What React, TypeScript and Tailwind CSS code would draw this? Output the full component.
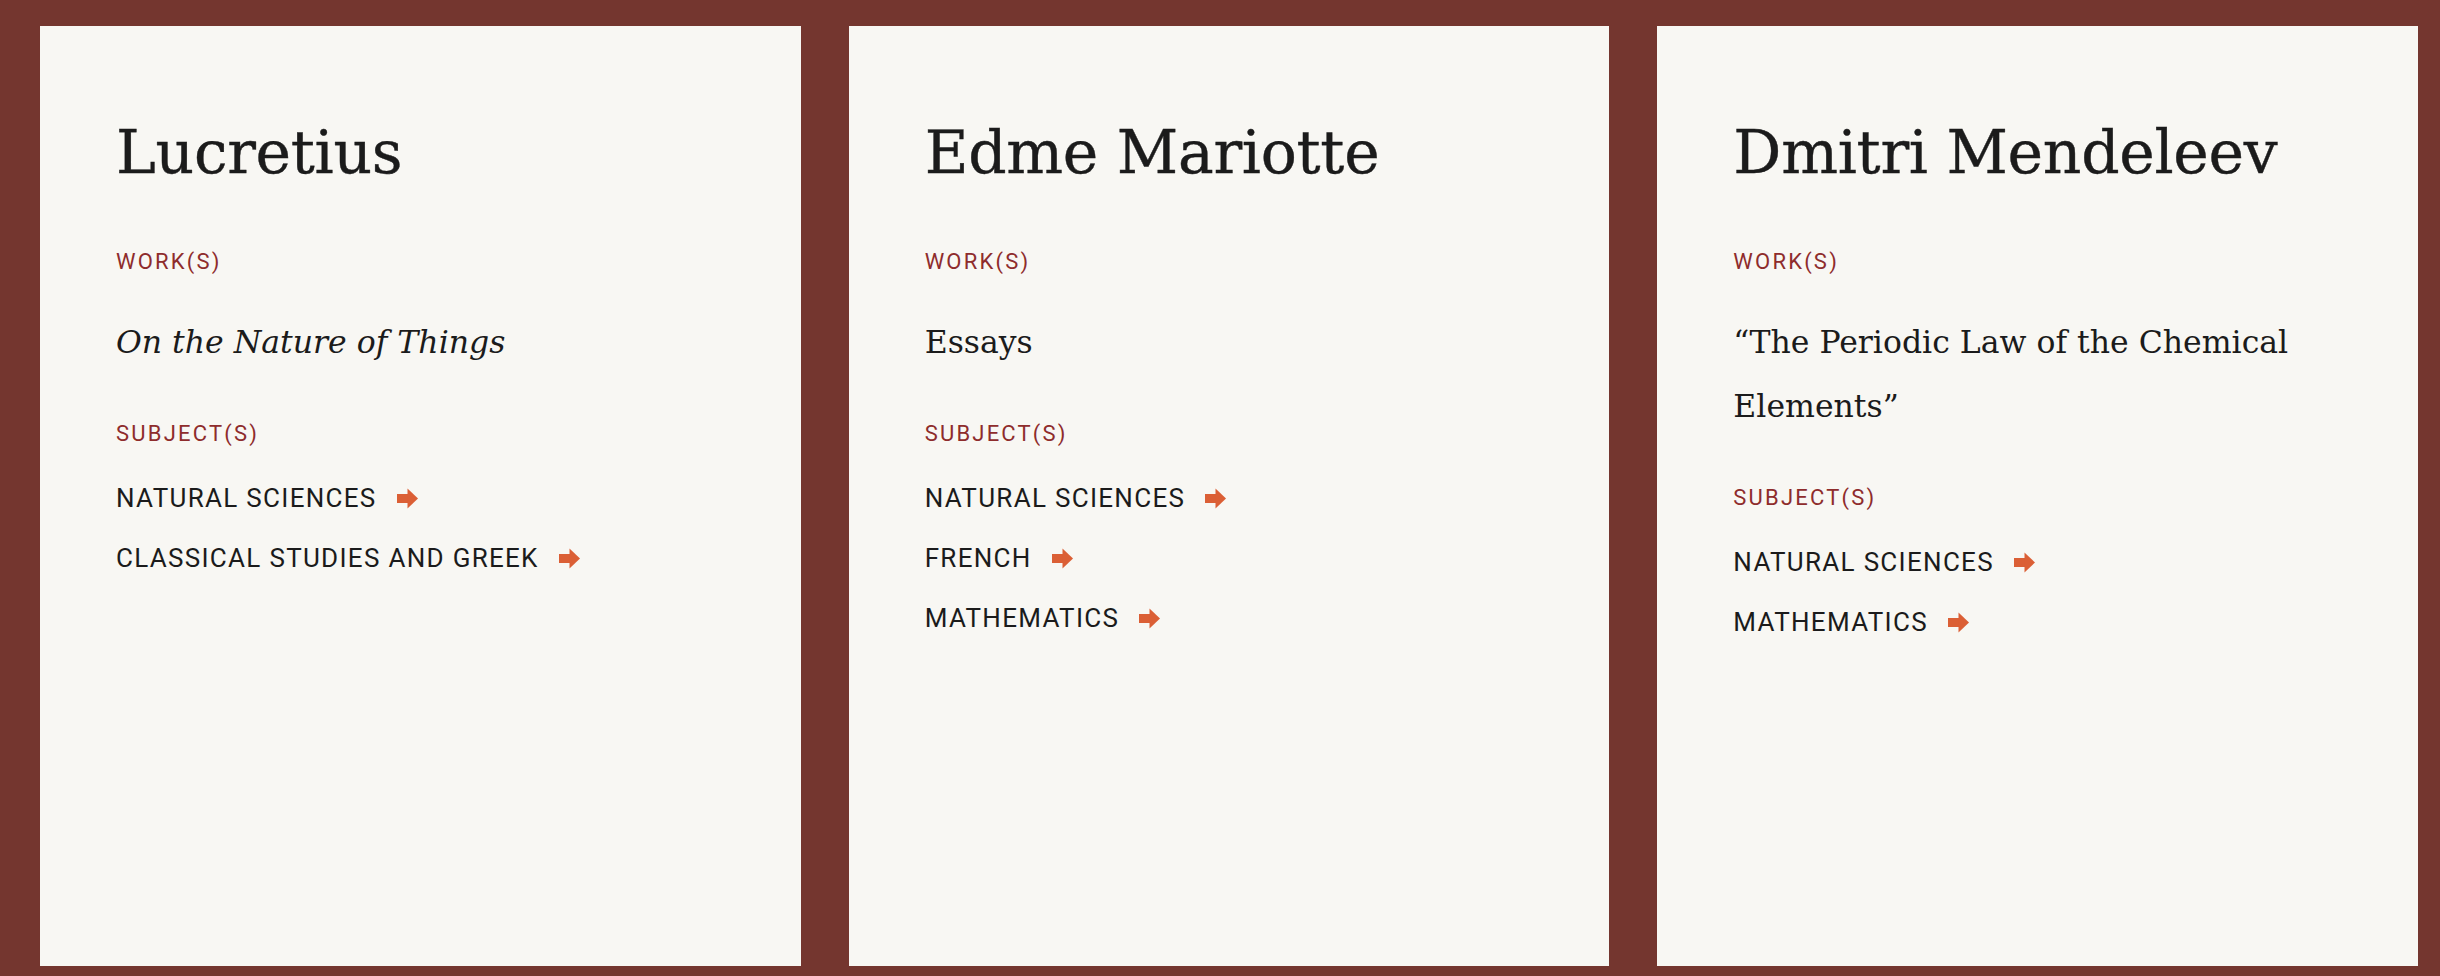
import React from "react";

const serif = { fontFamily: '"DejaVu Serif", "Liberation Serif", serif' };

type Card = { name: string; work: React.ReactNode; subjects: string[] };

const cards: Card[] = [
  {
    name: "Lucretius",
    work: <span className="italic">On the Nature of Things</span>,
    subjects: ["Natural Sciences", "Classical Studies and Greek"],
  },
  { name: "Edme Mariotte", work: <span>Essays</span>, subjects: ["Natural Sciences", "French", "Mathematics"] },
  {
    name: "Dmitri Mendeleev",
    work: <span>“The Periodic Law of the Chemical Elements”</span>,
    subjects: ["Natural Sciences", "Mathematics"],
  },
];

function Arrow() {
  return (
    <svg width="21" height="21" viewBox="0 0 21 21" className="ml-[20px] shrink-0" aria-hidden>
      <rect x="0" y="6" width="11.5" height="9" fill="#db5f35" />
      <polygon points="10.5,0.5 21,10.5 10.5,20.5" fill="#db5f35" />
    </svg>
  );
}

export default function App() {
  return (
    <div className="h-[976px] w-[2440px] bg-[#74362f] pl-[40px] pr-[22px] pt-[26px] pb-[10px] grid grid-cols-3 gap-[48px]">
      {cards.map((c) => (
        <div key={c.name} className="bg-[#f8f7f3] px-[76px] pt-[90px] text-[#1b1b1b]">
          <h1
            className="text-[60px] leading-[72px] tracking-[-0.005em] font-normal [-webkit-text-stroke:0.4px_#1b1b1b]"
            style={serif}
          >
            {c.name}
          </h1>
          <div className="mt-[58px] text-[22px] leading-[32px] tracking-[0.1em] uppercase text-[#8e2c2c] font-['Roboto',sans-serif]">
            Work(s)
          </div>
          <div className="mt-[32px] text-[31.5px] leading-[64px]" style={serif}>
            {c.work}
          </div>
          <div className="mt-[44px] text-[22px] leading-[32px] tracking-[0.1em] uppercase text-[#8e2c2c] font-['Roboto',sans-serif]">
            Subject(s)
          </div>
          <ul className="mt-[18px]">
            {c.subjects.map((s) => (
              <li
                key={s}
                className="flex items-center h-[60px] text-[26px] leading-[60px] tracking-[0.05em] uppercase font-['Roboto',sans-serif]"
              >
                <span>{s}</span>
                <Arrow />
              </li>
            ))}
          </ul>
        </div>
      ))}
    </div>
  );
}
